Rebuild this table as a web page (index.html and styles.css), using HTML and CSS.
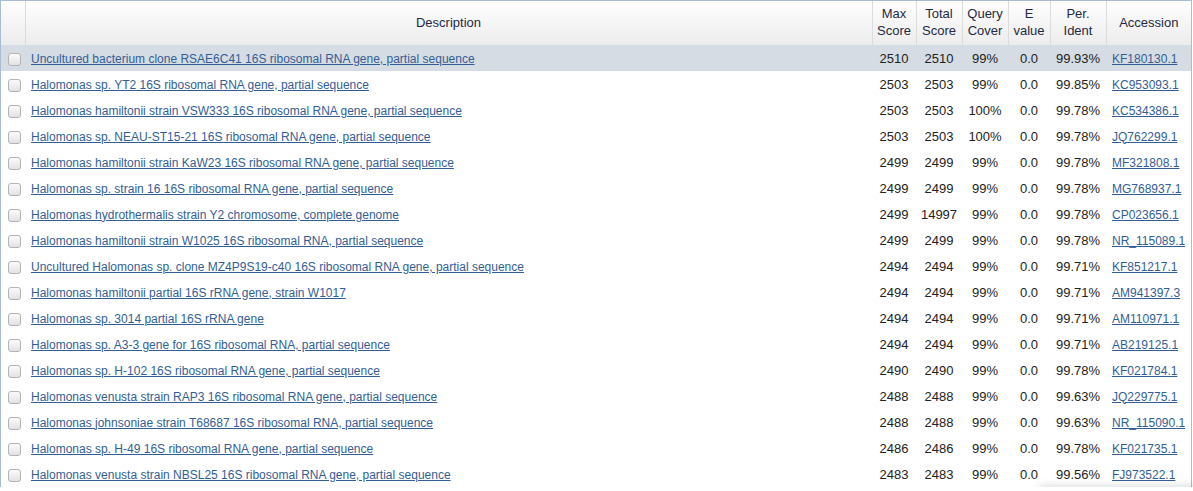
FILE: index.html
```html
<!DOCTYPE html>
<html lang="en">
<head>
    <meta charset="UTF-8">
    <title>Sequences producing significant alignments</title>
    <link rel="stylesheet" href="styles.css">
</head>
<body>

    <div class="results">
        <table class="hits">
            <colgroup>
                <col class="c-check">
                <col class="c-desc">
                <col class="c-max">
                <col class="c-total">
                <col class="c-cover">
                <col class="c-eval">
                <col class="c-ident">
                <col class="c-acc">
            </colgroup>
            <thead>
                <tr>
                    <th class="first"></th>
                    <th>Description</th>
                    <th>Max<br>Score</th>
                    <th>Total<br>Score</th>
                    <th>Query<br>Cover</th>
                    <th>E<br>value</th>
                    <th>Per.<br>Ident</th>
                    <th>Accession</th>
                </tr>
            </thead>
            <tbody id="hit_rows"></tbody>
        </table>
        <div class="popup-shadow"></div>
    </div>

    <script>
        // description, max, total, cover, evalue, ident, accession
        var hits = [
            ["Uncultured bacterium clone RSAE6C41 16S ribosomal RNA gene, partial sequence", 2510, 2510, "99%", "0.0", "99.93%", "KF180130.1"],
            ["Halomonas sp. YT2 16S ribosomal RNA gene, partial sequence", 2503, 2503, "99%", "0.0", "99.85%", "KC953093.1"],
            ["Halomonas hamiltonii strain VSW333 16S ribosomal RNA gene, partial sequence", 2503, 2503, "100%", "0.0", "99.78%", "KC534386.1"],
            ["Halomonas sp. NEAU-ST15-21 16S ribosomal RNA gene, partial sequence", 2503, 2503, "100%", "0.0", "99.78%", "JQ762299.1"],
            ["Halomonas hamiltonii strain KaW23 16S ribosomal RNA gene, partial sequence", 2499, 2499, "99%", "0.0", "99.78%", "MF321808.1"],
            ["Halomonas sp. strain 16 16S ribosomal RNA gene, partial sequence", 2499, 2499, "99%", "0.0", "99.78%", "MG768937.1"],
            ["Halomonas hydrothermalis strain Y2 chromosome, complete genome", 2499, 14997, "99%", "0.0", "99.78%", "CP023656.1"],
            ["Halomonas hamiltonii strain W1025 16S ribosomal RNA, partial sequence", 2499, 2499, "99%", "0.0", "99.78%", "NR_115089.1"],
            ["Uncultured Halomonas sp. clone MZ4P9S19-c40 16S ribosomal RNA gene, partial sequence", 2494, 2494, "99%", "0.0", "99.71%", "KF851217.1"],
            ["Halomonas hamiltonii partial 16S rRNA gene, strain W1017", 2494, 2494, "99%", "0.0", "99.71%", "AM941397.3"],
            ["Halomonas sp. 3014 partial 16S rRNA gene", 2494, 2494, "99%", "0.0", "99.71%", "AM110971.1"],
            ["Halomonas sp. A3-3 gene for 16S ribosomal RNA, partial sequence", 2494, 2494, "99%", "0.0", "99.71%", "AB219125.1"],
            ["Halomonas sp. H-102 16S ribosomal RNA gene, partial sequence", 2490, 2490, "99%", "0.0", "99.78%", "KF021784.1"],
            ["Halomonas venusta strain RAP3 16S ribosomal RNA gene, partial sequence", 2488, 2488, "99%", "0.0", "99.63%", "JQ229775.1"],
            ["Halomonas johnsoniae strain T68687 16S ribosomal RNA, partial sequence", 2488, 2488, "99%", "0.0", "99.63%", "NR_115090.1"],
            ["Halomonas sp. H-49 16S ribosomal RNA gene, partial sequence", 2486, 2486, "99%", "0.0", "99.78%", "KF021735.1"],
            ["Halomonas venusta strain NBSL25 16S ribosomal RNA gene, partial sequence", 2483, 2483, "99%", "0.0", "99.56%", "FJ973522.1"]
        ];

        var body = document.getElementById("hit_rows");
        hits.forEach(function (h, i) {
            var tr = document.createElement("tr");
            if (i === 0) tr.className = "selected";
            tr.innerHTML =
                '<td class="check"><input type="checkbox"></td>' +
                '<td class="desc"><a href="#">' + h[0] + '</a></td>' +
                '<td class="num">' + h[1] + '</td>' +
                '<td class="num">' + h[2] + '</td>' +
                '<td class="num">' + h[3] + '</td>' +
                '<td class="num">' + h[4] + '</td>' +
                '<td class="num">' + h[5] + '</td>' +
                '<td class="acc"><a href="#">' + h[6] + '</a></td>';
            body.appendChild(tr);
        });
    </script>

</body>
</html>
```

FILE: styles.css
```css
body {
    margin: 0;
    font-family: "Liberation Sans", Arial, sans-serif;
    font-size: 12px;
    color: #222;
    background: #fff;
    overflow: hidden;
}

.results {
    position: relative;
    width: 1190px;
    border: 1px solid #a9bcd3;
    border-bottom: none;
}

.hits {
    width: 1190px;
    table-layout: fixed;
    border-collapse: collapse;
}

.c-check { width: 24px; }
.c-desc { width: 847px; }
.c-max { width: 44px; }
.c-total { width: 46px; }
.c-cover { width: 46px; }
.c-eval { width: 42px; }
.c-ident { width: 56px; }
.c-acc { width: 85px; }

th {
    height: 42px;
    padding: 0 0 2px;
    font-weight: normal;
    font-size: 13px;
    line-height: 17px;
    color: #1f2a44;
    border-left: 1px solid #dcdcdc;
    background: linear-gradient(#fefefe, #ececec);
    text-align: center;
}

th.first {
    border-left: none;
}

td {
    height: 25px;
    padding: 1px 0 0;
    font-size: 13px;
    white-space: nowrap;
}

tr.selected td {
    background: #d5dce3;
}

td.check {
    text-align: center;
}

td.check input {
    width: 13px;
    height: 13px;
    margin: 0 0 0 2px;
    vertical-align: middle;
    appearance: none;
    border: 1px solid #b3b3b3;
    border-radius: 3px;
    background: linear-gradient(#fbfbfb, #e2e2e2);
}

td.desc {
    padding-left: 6px;
    font-size: 12px;
}

td.num {
    text-align: center;
}

td.acc {
    padding-left: 6px;
    font-size: 12px;
}

a {
    color: #335e95;
    text-decoration: underline;
}

.popup-shadow {
    position: absolute;
    left: 1040px;
    top: 487px;
    width: 200px;
    height: 40px;
    background: #fff;
    box-shadow: -2px -3px 8px rgba(0, 0, 0, 0.12);
}
```
